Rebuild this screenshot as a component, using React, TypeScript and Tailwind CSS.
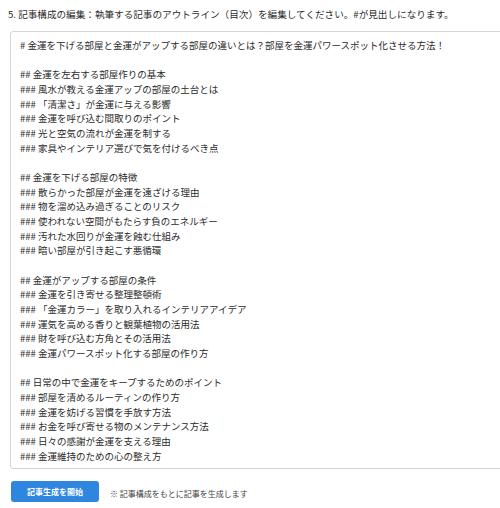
import React from "react";

const lines = [
  "# 金運を下げる部屋と金運がアップする部屋の違いとは？部屋を金運パワースポット化させる方法！",
  "",
  "## 金運を左右する部屋作りの基本",
  "### 風水が教える金運アップの部屋の土台とは",
  "### 「清潔さ」が金運に与える影響",
  "### 金運を呼び込む間取りのポイント",
  "### 光と空気の流れが金運を制する",
  "### 家具やインテリア選びで気を付けるべき点",
  "",
  "## 金運を下げる部屋の特徴",
  "### 散らかった部屋が金運を遠ざける理由",
  "### 物を溜め込み過ぎることのリスク",
  "### 使われない空間がもたらす負のエネルギー",
  "### 汚れた水回りが金運を蝕む仕組み",
  "### 暗い部屋が引き起こす悪循環",
  "",
  "## 金運がアップする部屋の条件",
  "### 金運を引き寄せる整理整頓術",
  "### 「金運カラー」を取り入れるインテリアアイデア",
  "### 運気を高める香りと観葉植物の活用法",
  "### 財を呼び込む方角とその活用法",
  "### 金運パワースポット化する部屋の作り方",
  "",
  "## 日常の中で金運をキープするためのポイント",
  "### 部屋を清めるルーティンの作り方",
  "### 金運を妨げる習慣を手放す方法",
  "### お金を呼び寄せる物のメンテナンス方法",
  "### 日々の感謝が金運を支える理由",
  "### 金運維持のための心の整え方",
];

export default function App() {
  return (
    <div
      className="w-[500px] h-[508px] overflow-hidden bg-white text-[#333]"
      style={{ fontFamily: '"Noto Sans CJK JP", "Noto Sans", sans-serif' }}
    >
      <div className="pl-[8px] pt-[6px] text-[9.6px] leading-[16px] whitespace-nowrap text-[#2b2b2b]">
        5. 記事構成の編集：執筆する記事のアウトライン（目次）を編集してください。#が見出しになります。
      </div>
      <div className="ml-[10px] mt-[9px] w-[494px] h-[438px] border border-[#d6d6d6] rounded-[3px] pl-[9px] pt-[6px]">
        {lines.map((l, i) => (
          <div key={i} className="h-[14.68px] text-[9.5px] leading-[14.68px] whitespace-pre text-[#2b2b2b]">
            {l}
          </div>
        ))}
      </div>
      <div className="flex items-center ml-[11px] mt-[12px]">
        <div className="w-[88px] h-[21px] rounded-[3px] bg-[#2e86de] flex items-center justify-center text-white text-[8px] font-bold">
          記事生成を開始
        </div>
        <div className="ml-[11px] mt-[5px] text-[8px] text-[#444] whitespace-nowrap">※ 記事構成をもとに記事を生成します</div>
      </div>
    </div>
  );
}
